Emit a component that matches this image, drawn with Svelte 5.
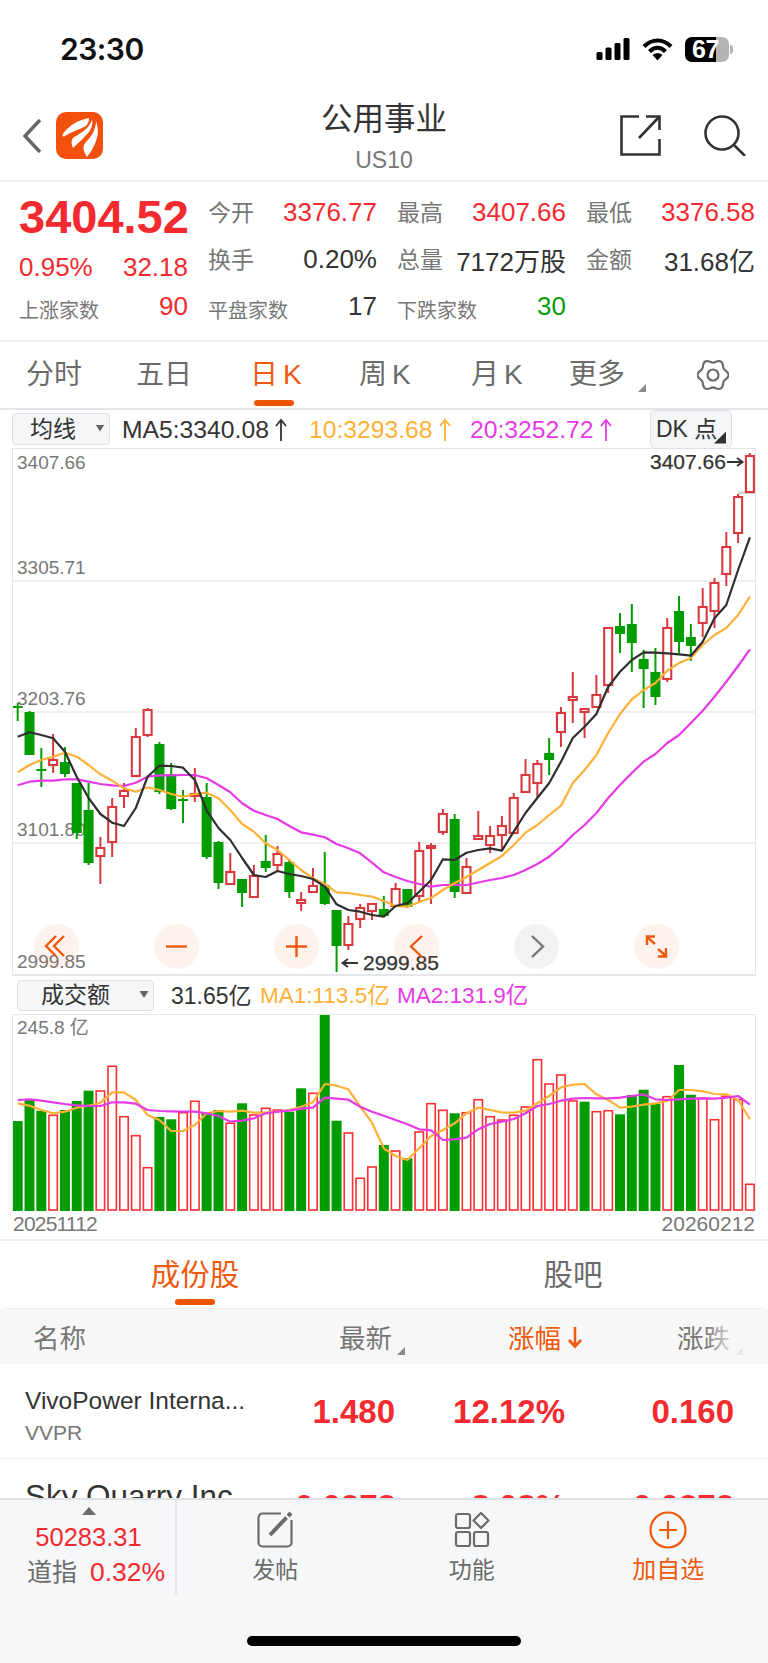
<script>
  // candle: [green?, high, body top, body bottom, low] in page px
  const g = 1, r = 0;
  const candles = [
    [g,703,706,708,721],[g,711,712,755,755],[g,748,769,771,787],[r,734,760,765,773],[g,747,762,774,777],
    [g,783,783,833,839],[g,783,810,863,865],[r,837,848,856,884],[r,798,807,842,857],[r,783,791,796,808],
    [r,728,737,776,776],[r,708,710,735,737],[g,742,744,792,794],[g,763,774,809,810],[g,790,799,801,823],
    [r,768,794,796,802],[g,783,797,857,859],[g,841,842,883,889],[r,853,872,884,884],[g,879,879,893,907],
    [r,865,876,897,897],[g,835,861,868,872],[r,846,854,865,871],[g,860,862,892,898],[r,892,900,903,911],
    [r,868,886,892,893],[g,852,885,904,905],[g,910,910,946,972],[r,916,924,945,950],[r,904,908,919,928],
    [r,903,904,911,920],[g,896,909,916,916],[r,883,889,906,906],[g,889,889,907,908],[r,842,851,896,903],
    [r,843,846,848,904],[r,809,814,832,835],[g,814,819,892,898],[r,858,867,893,893],[r,811,836,839,839],
    [r,826,836,845,853],[r,816,826,835,850],[r,793,798,833,833],[r,759,775,792,792],[r,760,764,783,797],
    [g,738,753,760,775],[r,707,713,732,747],[r,672,697,700,723],[r,708,709,712,738],[r,675,695,707,707],
    [r,628,628,685,693],[g,613,626,634,653],[g,604,624,643,672],[g,650,659,669,708],[g,648,672,697,705],
    [r,618,628,679,682],[g,596,611,642,653],[g,624,637,646,661],[r,588,607,623,637],[r,578,583,611,628],
    [r,532,547,574,586],[r,494,497,533,543],[r,453,456,492,492]
  ];
  const ma5 = [736.7,732.3,735,738.3,751.7,777,798,814,822.7,826,808,776.7,765.7,766,767.7,780,810.7,828,840,858,875,877,871,874,876,879,886.7,904.3,910,911.7,915,916.7,906,903.3,891.7,880,859.3,860,852.7,850,848.3,850.7,831.7,813,798,783,761.7,738,726.7,714,686.7,671.7,660,652.3,652.7,653.3,654.3,655.7,641.7,618.3,605,570,537.3];
  const ma10 = [772.3,765,760,756.7,752.7,756.7,765,774.3,780.7,788.3,791.7,787.3,790,794,796.7,794,792.7,798.3,810,824,831.7,843.3,850,860,870,878.3,884,892.3,893,895,896.5,901,906,906.7,902,898,890,883,877,870,863,856,845,832.7,825,815,805.7,783,770,755,733,714,699.3,690,683,670.7,663,658,645,635,628,615,596.7];
  const ma20 = [785.3,781.7,780.7,780.7,779.3,779.3,781.7,784,785.3,786,782.7,776.7,775.3,775.3,775,775,778.3,785,792.3,803.3,810.7,815,819,826,832.3,834.7,837.3,844,848.3,853.3,862.7,872.3,877,881,884,886.7,885,885,885,882.5,880,878,875,870,864,856.7,846.7,835,825,813,798,785,773,761.7,754,743,735,723,710.7,696.7,681.7,666,649.3];

  // volume: [green?, top] top is in px below y=970, times 3
  const vols = [
    [g,453],[g,390],[g,422],[r,436],[g,420],[g,393],[g,362],[r,363],[r,289],[r,440],[r,497],[r,593],[g,441],[g,448],[r,428],[r,394],
    [g,430],[g,420],[r,460],[g,400],[r,435],[r,415],[r,420],[g,425],[g,355],[r,370],[g,133],[g,452],[r,489],[r,625],[r,591],[g,525],
    [r,543],[g,565],[r,486],[r,401],[r,421],[g,430],[r,428],[r,389],[r,440],[r,450],[r,436],[r,411],[r,269],[r,342],[r,315],[r,393],
    [g,395],[r,425],[r,422],[g,433],[g,375],[g,359],[g,402],[r,380],[g,285],[g,374],[r,385],[r,449],[r,379],[r,389],[r,643]
  ];
  const volMa1 = [400,407,420,430,425,413,407,398,367,367,390,435,450,483,483,465,430,423,425,422,428,428,425,420,410,397,342,347,358,410,458,535,558,570,535,498,480,460,430,413,420,427,428,422,400,378,352,344,342,373,390,413,410,404,400,393,360,360,364,372,373,390,448];
  const volMa2 = [390,388,392,397,402,406,408,408,397,397,401,420,423,424,425,425,430,438,455,452,445,430,425,422,416,413,383,386,389,410,425,437,450,463,478,481,510,508,503,478,462,455,447,430,408,402,392,386,384,385,385,383,378,373,388,390,388,386,385,386,383,378,404];

  const xAt = (i) => 17.7 + i * 11.81;
  const line = (arr) => arr.map((y, i) => `${xAt(i).toFixed(1)},${y}`).join(' ');
  const volY = (z) => +(970 + z / 3).toFixed(1);

  const tabs = [{ t: '分时' }, { t: '五日' }, { t: '日', k: true, on: true }, { t: '周', k: true }, { t: '月', k: true }];
  const gridY = [581, 712, 843];
  const axis = [['3407.66', 469], ['3305.71', 574], ['3203.76', 705], ['3101.80', 836], ['2999.85', 968]];

  let gearPath = '';
  for (let a = 0; a <= 360; a += 6) {
    const rad = (a * Math.PI) / 180;
    const rr = 14 + 1.6 * Math.cos(6 * rad);
    gearPath += `${a ? 'L' : 'M'}${(16 + rr * Math.cos(rad)).toFixed(2)} ${(16 + rr * Math.sin(rad)).toFixed(2)}`;
  }
</script>

<div class="page">
  <div class="status">
    <span class="time">23:30</span>
    <div class="status-icons">
      <svg width="35" height="24" viewBox="0 0 35 24">
        <rect x="0.5" y="15" width="6" height="8" rx="1.5" />
        <rect x="9.5" y="10.5" width="6" height="12.5" rx="1.5" />
        <rect x="18.5" y="6" width="6" height="17" rx="1.5" />
        <rect x="27.5" y="1" width="6" height="22" rx="1.5" />
      </svg>
      <svg class="wifi" width="31" height="24" viewBox="0 0 31 24">
        <path d="M2 9.5C10 1.5 21 1.5 29 9.5" />
        <path d="M7.5 14.5C12.5 9.5 18.5 9.5 23.5 14.5" />
        <path class="wifi-dot" d="M15.5 23.5L10.5 18C13.5 15.6 17.5 15.6 20.5 18Z" />
      </svg>
      <div class="battery"><span class="battery-fill"></span><b>67</b><i></i></div>
    </div>
  </div>

  <div class="nav">
    <div class="nav-left">
      <svg width="20" height="36" viewBox="0 0 20 36" class="back"><path d="M18 2L3 18L18 34" /></svg>
      <div class="logo">
        <svg width="47" height="47" viewBox="0 0 47 47">
          <path d="M33 6C22 8 12 14 7 22C6 24 7 25 9 24C15 20 22 18 30 14C32 12 33 9 33 6Z" fill="#fff" />
          <path d="M36 7C35 13 29 19 20 24C16 26 14 29 17 36C20 33 28 26 33 20C36 16 37 11 36 7Z" fill="#fff" />
          <path d="M40 9C40 17 36 24 30 30C27 33 26 37 31 45C36 39 41 30 42 20C42 16 41 12 40 9Z" fill="#fff" />
        </svg>
      </div>
    </div>
    <div class="nav-title">
      <div class="title">公用事业</div>
      <div class="code">US10</div>
    </div>
    <div class="nav-right">
      <svg class="ico" width="41" height="41" viewBox="0 0 41 41">
        <path d="M19 1.5H1.5V39.5H39.5V24" /><path d="M19 23L39 2M26 1.5H39.5V15" />
      </svg>
      <svg class="ico" width="42" height="41" viewBox="0 0 42 41">
        <circle cx="18" cy="18" r="16.5" /><path d="M30 30L41 41" />
      </svg>
    </div>
  </div>

  <div class="stats">
    <div class="cell big-cell"><span class="big">3404.52</span></div>
    <div class="cell"><span class="lb">今开</span><span class="up">3376.77</span></div>
    <div class="cell"><span class="lb">最高</span><span class="up">3407.66</span></div>
    <div class="cell"><span class="lb">最低</span><span class="up">3376.58</span></div>

    <div class="cell low-cell"><span class="up">0.95%</span><span class="up">32.18</span></div>
    <div class="cell"><span class="lb">换手</span><span class="dark">0.20%</span></div>
    <div class="cell"><span class="lb">总量</span><span class="dark">7172万股</span></div>
    <div class="cell"><span class="lb">金额</span><span class="dark">31.68亿</span></div>

    <div class="cell"><span class="lb sm">上涨家数</span><span class="up">90</span></div>
    <div class="cell"><span class="lb sm">平盘家数</span><span class="dark">17</span></div>
    <div class="cell"><span class="lb sm">下跌家数</span><span class="green">30</span></div>
    <div class="cell"></div>
  </div>

  <div class="ktabs">
    {#each tabs as tab}
      <div class="ktab" class:on={tab.on}>
        {tab.t}{#if tab.k}<span class="k">K</span>{/if}
        {#if tab.on}<span class="ktab-bar"></span>{/if}
      </div>
    {/each}
    <div class="ktab">更多<span class="corner grey"></span></div>
    <svg class="gear" width="32" height="32" viewBox="0 0 32 32">
      <path d={gearPath} /><circle cx="16" cy="16" r="5.5" />
    </svg>
  </div>

  <div class="ma-row">
    <div class="select sel-ma">均线<span class="drop"></span></div>
    <span class="ma ma-a">MA5:3340.08<svg class="up-arrow" width="14" height="24" viewBox="0 0 14 24"><path d="M7 23V2M2 8L7 2L12 8" /></svg></span>
    <span class="ma ma-b">10:3293.68<svg class="up-arrow" width="14" height="24" viewBox="0 0 14 24"><path d="M7 23V2M2 8L7 2L12 8" /></svg></span>
    <span class="ma ma-c">20:3252.72<svg class="up-arrow" width="14" height="24" viewBox="0 0 14 24"><path d="M7 23V2M2 8L7 2L12 8" /></svg></span>
    <div class="select sel-dk">DK 点<span class="corner dark-corner"></span></div>
  </div>

  <div class="chart">
    <svg width="768" height="528" viewBox="0 448 768 528">
      {#each gridY as y}
        <line x1="13" x2="755" y1={y} y2={y} class="grid" />
      {/each}
      {#each axis as a}
        <text x="17" y={a[1]} class="ax">{a[0]}</text>
      {/each}
      <rect x="738" y="491.5" width="17" height="2.5" fill="#d2d2d2" />
      {#each candles as c, i}
        {#if c[0]}
          <line x1={xAt(i)} x2={xAt(i)} y1={c[1]} y2={c[4]} class="wick-g" />
          <rect x={xAt(i) - 5} y={c[2]} width="10" height={c[3] - c[2]} fill="#009c00" />
        {:else}
          <line x1={xAt(i)} x2={xAt(i)} y1={c[1]} y2={c[2]} class="wick-r" />
          <line x1={xAt(i)} x2={xAt(i)} y1={c[3]} y2={c[4]} class="wick-r" />
          <rect x={xAt(i) - 4} y={c[2]} width="8" height={c[3] - c[2]} class="body-r" />
        {/if}
      {/each}
      <polyline points={line(ma20)} class="ln" stroke="#e63ae6" />
      <polyline points={line(ma10)} class="ln" stroke="#ffb036" />
      <polyline points={line(ma5)} class="ln" stroke="#2f2f2f" />
      <text x="650" y="469" class="peak">3407.66</text>
      <path d="M727 462H742M737 458L742.5 462L737 466" class="peak-arrow" />
      <text x="363" y="970" class="peak">2999.85</text>
      <path d="M358 963H343M348 959L342.5 963L348 967" class="peak-arrow" />
    </svg>
    <div class="chart-btns">
      <div class="cbtn">
        <svg width="45" height="45" viewBox="0 0 45 45"><path d="M23 13L13 23L23 33M31 13L21 23L31 33" transform="translate(-1 -1)" /></svg>
      </div>
      <div class="cbtn"><svg width="45" height="45" viewBox="0 0 45 45"><path d="M12 22.5H33" /></svg></div>
      <div class="cbtn"><svg width="45" height="45" viewBox="0 0 45 45"><path d="M12 22.5H33M22.5 12V33" /></svg></div>
      <div class="cbtn"><svg width="45" height="45" viewBox="0 0 45 45"><path d="M28 12L17 22.5L28 33" /></svg></div>
      <div class="cbtn off"><svg width="45" height="45" viewBox="0 0 45 45"><path d="M18 12L29 22.5L18 33" /></svg></div>
      <div class="cbtn">
        <svg width="45" height="45" viewBox="0 0 45 45"><path d="M13 13L21 20M13 21V12.5H21M32 32L24 25M32 24V32.5H24" /></svg>
      </div>
    </div>
  </div>

  <div class="vol-row">
    <div class="select sel-vol">成交额<span class="drop"></span></div>
    <span class="ma vol-a">31.65亿</span>
    <span class="ma vol-b">MA1:113.5亿</span>
    <span class="ma vol-c">MA2:131.9亿</span>
  </div>

  <div class="vol-chart">
    <svg width="768" height="197" viewBox="0 1014 768 197">
      <text x="17" y="1034" class="ax">245.8 亿</text>
      {#each vols as v, i}
        {#if v[0]}
          <rect x={xAt(i) - 5} y={volY(v[1])} width="10" height={1211 - volY(v[1])} fill="#009c00" />
        {:else}
          <rect x={xAt(i) - 4.2} y={volY(v[1])} width="8.4" height={1210 - volY(v[1])} class="vol-r" />
        {/if}
      {/each}
      <polyline points={line(volMa1.map(volY))} class="ln" stroke="#ffb036" />
      <polyline points={line(volMa2.map(volY))} class="ln" stroke="#e63ae6" />
    </svg>
  </div>

  <div class="dates"><span class="date-l">20251112</span><span>20260212</span></div>

  <div class="subtabs">
    <div class="subtab on">成份股<span class="subtab-bar"></span></div>
    <div class="subtab">股吧</div>
  </div>

  <div class="thead">
    <span>名称</span>
    <span class="th">最新<span class="corner grey"></span></span>
    <span class="th active">涨幅<svg width="16" height="24" viewBox="0 0 16 24"><path d="M8 2V21M2 15L8 21.5L14 15" /></svg></span>
    <span class="th">涨跌<span class="corner grey"></span></span>
    <div class="fade"></div>
  </div>

  <div class="rows">
    <div class="row">
      <div class="name">VivoPower Interna...<small>VVPR</small></div>
      <span class="val">1.480</span><span class="val">12.12%</span><span class="val">0.160</span>
    </div>
    <div class="row">
      <div class="name wide">Sky Quarry Inc</div>
      <span class="val">0.0373</span><span class="val">8.08%</span><span class="val">0.0373</span>
    </div>
  </div>

  <div class="tabbar">
    <div class="tabbar-row">
      <div class="index">
        <span class="index-tri"></span>
        <div class="index-val">50283.31</div>
        <div class="index-line"><span class="index-name">道指</span><span class="index-pct">0.32%</span></div>
      </div>
      <div class="bar-item">
        <svg width="36" height="36" viewBox="0 0 36 36" class="bar-ico">
          <path d="M24 1.5H5.5A4 4 0 0 0 1.5 5.5V30.5A4 4 0 0 0 5.5 34.5H30.5A4 4 0 0 0 34.5 30.5V8" />
          <path class="pen" d="M13 23L29.5 5.5" /><path class="pen" d="M31 4L34 1" />
        </svg>
        <span>发帖</span>
      </div>
      <div class="bar-item">
        <svg width="36" height="36" viewBox="0 0 36 36" class="bar-ico">
          <rect x="2" y="2" width="14" height="14" rx="2" />
          <rect x="2" y="20" width="14" height="14" rx="2" />
          <rect x="20" y="20" width="14" height="14" rx="2" />
          <path d="M27 1L34.5 8.5L27 16L19.5 8.5Z" stroke-linejoin="round" />
        </svg>
        <span>功能</span>
      </div>
      <div class="bar-item add">
        <svg width="38" height="38" viewBox="0 0 38 38" class="bar-ico">
          <circle cx="19" cy="19" r="17.5" /><path d="M10 19H28M19 10V28" />
        </svg>
        <span>加自选</span>
      </div>
    </div>
    <div class="home"></div>
  </div>
</div>

<style>
  :global(body) {
    margin: 0;
    background: #fff;
  }

  .page {
    width: 768px;
    height: 1663px;
    overflow: hidden;
    background: #fff;
    display: flex;
    flex-direction: column;
    font-family: "Liberation Sans", "Noto Sans CJK SC", sans-serif;
    color: #333;
  }

  .page > * {
    flex: none;
  }

  /* status bar */
  .status {
    height: 102px;
    display: flex;
    justify-content: space-between;
    align-items: flex-start;
    padding: 32px 39px 0 60px;
    box-sizing: border-box;
  }

  .time {
    font-family: Inter, sans-serif;
    font-size: 30px;
    font-weight: 600;
    line-height: 35px;
    color: #111;
    letter-spacing: -0.5px;
  }

  .status-icons {
    display: flex;
    align-items: center;
    gap: 11px;
    margin-top: 4px;
    height: 26px;
  }

  .wifi path {
    fill: none;
    stroke: #000;
    stroke-width: 4.2;
  }

  .wifi .wifi-dot {
    fill: #000;
    stroke: none;
  }

  .battery {
    position: relative;
    width: 44px;
    height: 25px;
    border-radius: 7px;
    background: #b4b4b4;
    margin-left: 1px;
  }

  .battery-fill {
    position: absolute;
    left: 0;
    top: 0;
    bottom: 0;
    width: 31px;
    background: #000;
    border-radius: 7px 0 0 7px;
  }

  .battery b {
    position: absolute;
    left: 7px;
    top: 0;
    line-height: 25px;
    font-size: 25px;
    color: #fff;
    letter-spacing: -0.5px;
    font-weight: 700;
  }

  .battery i {
    position: absolute;
    right: -4px;
    top: 8px;
    width: 3px;
    height: 9px;
    border-radius: 0 3px 3px 0;
    background: #b4b4b4;
  }

  /* nav */
  .nav {
    height: 78px;
    display: grid;
    grid-template-columns: 1fr auto 1fr;
    border-bottom: 2px solid #eee;
    box-sizing: content-box;
  }

  .nav-left {
    display: flex;
    align-items: center;
    padding: 0 0 11px 22px;
    gap: 14px;
  }

  .back path {
    fill: none;
    stroke: #666;
    stroke-width: 3.4;
  }

  .logo {
    width: 47px;
    height: 47px;
    border-radius: 10px;
    background: #f2500c;
    overflow: hidden;
  }

  .logo svg {
    display: block;
  }

  .nav-title {
    text-align: center;
  }

  .title {
    font-size: 31.5px;
    line-height: 34px;
    color: #333;
  }

  .code {
    font-size: 23px;
    line-height: 24px;
    margin-top: 12px;
    color: #777;
  }

  .nav-right {
    display: flex;
    justify-content: flex-end;
    align-items: center;
    padding: 0 22px 12px 0;
    gap: 43px;
  }

  .ico path,
  .ico circle {
    fill: none;
    stroke: #333;
    stroke-width: 2.6;
  }

  /* stats */
  .stats {
    border-bottom: 2px solid #eee;
    display: grid;
    grid-template-columns: repeat(4, 169px);
    grid-auto-rows: 47px;
    column-gap: 20px;
    padding: 7px 0 0 19px;
    box-sizing: content-box;
    height: 151px;
  }

  .cell {
    display: flex;
    justify-content: space-between;
    align-items: center;
    font-size: 26px;
    white-space: nowrap;
  }

  .big-cell {
    padding-top: 8px;
  }

  .low-cell {
    padding-top: 16px;
  }

  .big {
    font-size: 47px;
    font-weight: 700;
    color: #f32a2f;
    line-height: 1;
  }

  .lb {
    font-size: 23px;
    color: #777;
    padding-bottom: 3px;
  }

  .lb.sm {
    font-size: 20px;
    padding-bottom: 0;
    padding-top: 6px;
  }

  .up {
    color: #f32a2f;
  }

  .dark {
    color: #333;
  }

  .green {
    color: #0a9c0a;
  }

  /* k line tabs */
  .ktabs {
    height: 66px;
    border-bottom: 2px solid #e4e5e9;
    display: grid;
    grid-template-columns: 110px 114px 109px 112px 98px 128px 32px;
    padding-left: 26px;
    align-items: center;
  }

  .ktab {
    position: relative;
    font-size: 28px;
    line-height: 40px;
    color: #6b6b6b;
    justify-self: start;
    white-space: nowrap;
  }

  .ktab .k {
    margin-left: 5px;
  }

  .ktab.on {
    color: #ee5a0e;
  }

  .ktab-bar {
    position: absolute;
    left: 4px;
    right: 8px;
    bottom: -11px;
    height: 6px;
    border-radius: 3px;
    background: #ee5500;
  }

  .corner {
    position: absolute;
    clip-path: polygon(100% 0, 100% 100%, 0 100%);
  }

  .corner.grey {
    width: 8px;
    height: 8px;
    background: #8a8a8a;
    right: -21px;
    bottom: 3px;
  }

  .gear path,
  .gear circle {
    fill: none;
    stroke: #6b6b6b;
    stroke-width: 2.2;
  }

  /* MA legends */
  .ma-row,
  .vol-row {
    display: flex;
    align-items: center;
    position: relative;
  }

  .ma-row {
    height: 38px;
    padding-left: 12px;
  }

  .select {
    position: relative;
    box-sizing: border-box;
    background: #f5f6f8;
    border: 1.5px solid #dfe1e6;
    border-radius: 4px;
    font-size: 23px;
    color: #333;
    line-height: 1;
    display: flex;
    align-items: center;
  }

  .sel-ma {
    width: 98px;
    height: 32px;
    padding-left: 17px;
  }

  .drop {
    position: absolute;
    right: 4.5px;
    top: 10.5px;
    width: 9px;
    height: 7px;
    background: #666;
    clip-path: polygon(0 0, 100% 0, 50% 100%);
  }

  .ma {
    font-size: 24.7px;
    line-height: 30px;
    padding-top: 2px;
    white-space: nowrap;
    display: flex;
    align-items: center;
  }

  .up-arrow {
    margin-left: 5px;
  }

  .up-arrow path {
    fill: none;
    stroke: currentColor;
    stroke-width: 1.8;
  }

  .ma-a {
    margin-left: 12px;
    color: #333;
    width: 187px;
  }

  .ma-b {
    color: #ffb036;
    width: 161px;
  }

  .ma-c {
    color: #e63ae6;
    width: 180px;
  }

  .sel-dk {
    width: 82px;
    height: 39px;
    padding-left: 5px;
    font-size: 23px;
    border-radius: 5px;
    white-space: nowrap;
    position: relative;
    z-index: 1;
  }

  .dark-corner {
    width: 12px;
    height: 12px;
    background: #333;
    right: 5px;
    bottom: 4px;
  }

  /* chart */
  .chart {
    height: 528px;
    position: relative;
  }

  .chart svg,
  .vol-chart svg {
    display: block;
  }

  .chart::before,
  .vol-chart::before {
    content: "";
    position: absolute;
    left: 12px;
    width: 744px;
    top: 0;
    bottom: 0;
    box-sizing: border-box;
    border: 1.5px solid #e5e6ea;
  }

  .chart::before {
    border-bottom-width: 2px;
  }

  .vol-chart::before {
    border-bottom: none;
  }

  .grid {
    stroke: #e9ebf2;
    stroke-width: 1.5;
  }

  .ax {
    font-size: 19px;
    fill: #777;
  }

  .peak {
    font-size: 21px;
    fill: #333;
    stroke: #333;
    stroke-width: 0.25;
  }

  .peak-arrow {
    fill: none;
    stroke: #333;
    stroke-width: 2;
  }

  .wick-g {
    stroke: #009c00;
    stroke-width: 2;
  }

  .wick-r {
    stroke: #d8393f;
    stroke-width: 2;
  }

  .body-r {
    fill: #fff;
    stroke: #d8393f;
    stroke-width: 2.1;
  }

  .ln {
    fill: none;
    stroke-width: 2.2;
    stroke-linejoin: round;
  }

  .chart-btns {
    position: absolute;
    left: 33.5px;
    top: 476px;
    display: flex;
    gap: 75px;
  }

  .cbtn {
    width: 45px;
    height: 45px;
    border-radius: 50%;
    background: rgba(240, 90, 20, 0.08);
  }

  .cbtn svg {
    display: block;
  }

  .cbtn path {
    fill: none;
    stroke: #f0590f;
    stroke-width: 2.4;
  }

  .cbtn.off {
    background: rgba(0, 0, 0, 0.05);
  }

  .cbtn.off path {
    stroke: #777;
  }

  /* volume */
  .vol-row {
    height: 38px;
    padding-left: 17px;
  }

  .sel-vol {
    width: 137px;
    height: 31px;
    padding-left: 23px;
  }

  .vol-a {
    margin-left: 17px;
    width: 89px;
    color: #333;
    font-size: 23px;
  }

  .vol-b {
    width: 137px;
    color: #ffb036;
    font-size: 22.5px;
  }

  .vol-c {
    color: #e63ae6;
    font-size: 22.5px;
  }

  .vol-chart {
    height: 197px;
    position: relative;
  }

  .vol-r {
    fill: #fff;
    stroke: #ff2e32;
    stroke-width: 1.6;
  }

  .dates {
    height: 28px;
    display: flex;
    justify-content: space-between;
    padding: 0 13px;
    font-size: 21px;
    line-height: 26px;
    color: #777;
    border-bottom: 2px solid #eee;
  }

  .date-l {
    letter-spacing: -0.8px;
  }

  /* constituents */
  .subtabs {
    height: 67px;
    display: grid;
    grid-template-columns: repeat(2, 1fr);
    font-size: 29.5px;
    color: #6b6b6b;
    position: relative;
    margin: 0 6px;
    border-bottom: 1.5px solid #eee;
  }

  .subtab {
    position: relative;
    text-align: center;
    line-height: 40px;
    padding-top: 14px;
  }

  .subtab.on {
    color: #ee5a0e;
  }

  .subtab-bar {
    position: absolute;
    left: 50%;
    margin-left: -20px;
    top: 58px;
    width: 40px;
    height: 6px;
    border-radius: 3px;
    background: #ee5500;
  }

  .thead {
    position: relative;
    height: 55px;
    background: #f7f7f8;
    display: grid;
    grid-template-columns: 306px 169px 169px 1fr;
    padding-left: 33px;
    align-items: center;
    font-size: 26.5px;
    color: #777;
  }

  .th {
    position: relative;
    justify-self: start;
    display: flex;
    align-items: center;
  }

  .th .corner.grey {
    right: -13px;
    bottom: 1px;
  }

  .th.active {
    color: #ee5a0e;
  }

  .th svg {
    margin-left: 6px;
  }

  .th svg path {
    fill: none;
    stroke: #ee5a0e;
    stroke-width: 2.6;
  }

  .fade {
    position: absolute;
    right: 0;
    top: 0;
    bottom: 0;
    width: 63px;
    background: linear-gradient(to right, rgba(247, 247, 248, 0), rgba(247, 247, 248, 0.85) 45%, rgba(247, 247, 248, 0.8));
  }

  .rows {
    height: 134px;
    overflow: hidden;
  }

  .row {
    height: 95px;
    box-sizing: border-box;
    display: grid;
    grid-template-columns: 270px 100px 170px 169px;
    padding-left: 25px;
    border-bottom: 1.5px solid #f1f1f1;
  }

  .name {
    font-size: 24.5px;
    line-height: 28px;
    padding-top: 23px;
    white-space: nowrap;
    color: #333;
  }

  .name.wide {
    font-size: 31.4px;
    padding-top: 24px;
  }

  .name small {
    display: block;
    font-size: 21px;
    line-height: 26px;
    margin-top: 5px;
    color: #777;
  }

  .val {
    font-size: 33px;
    font-weight: 700;
    line-height: 40px;
    color: #f32a2f;
    text-align: right;
    padding-top: 28px;
    white-space: nowrap;
  }

  /* bottom bar */
  .tabbar {
    flex: 1 !important;
    border-top: 2px solid #dfe0e3;
    background: #f6f7f9;
    position: relative;
  }

  .tabbar-row {
    display: flex;
    height: 95px;
  }

  .index {
    width: 175px;
    height: 95px;
    flex: none;
    border-right: 2px solid #e6e7ea;
    position: relative;
    font-size: 25.5px;
  }

  .index-tri {
    position: absolute;
    left: 82px;
    top: 7px;
    width: 14px;
    height: 8px;
    background: #6b6b6b;
    clip-path: polygon(50% 0, 100% 100%, 0 100%);
  }

  .index-val {
    text-align: center;
    padding: 22px 0 0 2px;
    line-height: 30px;
    color: #f32a2f;
  }

  .index-line {
    display: flex;
    align-items: center;
    padding: 5px 0 0 27px;
    line-height: 30px;
  }

  .index-name {
    color: #6b6b6b;
    font-size: 25px;
    width: 63px;
  }

  .index-pct {
    color: #f32a2f;
    font-size: 26.5px;
  }

  .bar-item {
    width: 196.5px;
    flex: none;
    display: flex;
    flex-direction: column;
    align-items: center;
    padding-top: 11px;
    font-size: 23px;
    line-height: 30px;
    color: #6b6b6b;
    box-sizing: border-box;
  }

  .bar-ico {
    display: block;
    margin-bottom: 6px;
    height: 38px;
  }

  .bar-ico path,
  .bar-ico rect,
  .bar-ico circle {
    fill: none;
    stroke: #6b6b6b;
    stroke-width: 2.2;
  }

  .bar-ico .pen {
    stroke-width: 4;
    stroke-linecap: butt;
  }

  .add {
    color: #ee5a0e;
    font-size: 24px;
  }

  .add .bar-ico path,
  .add .bar-ico circle {
    stroke: #ee5a0e;
  }

  .home {
    width: 274px;
    height: 10px;
    margin: 41px auto 0;
    border-radius: 5px;
    background: #000;
  }
</style>
